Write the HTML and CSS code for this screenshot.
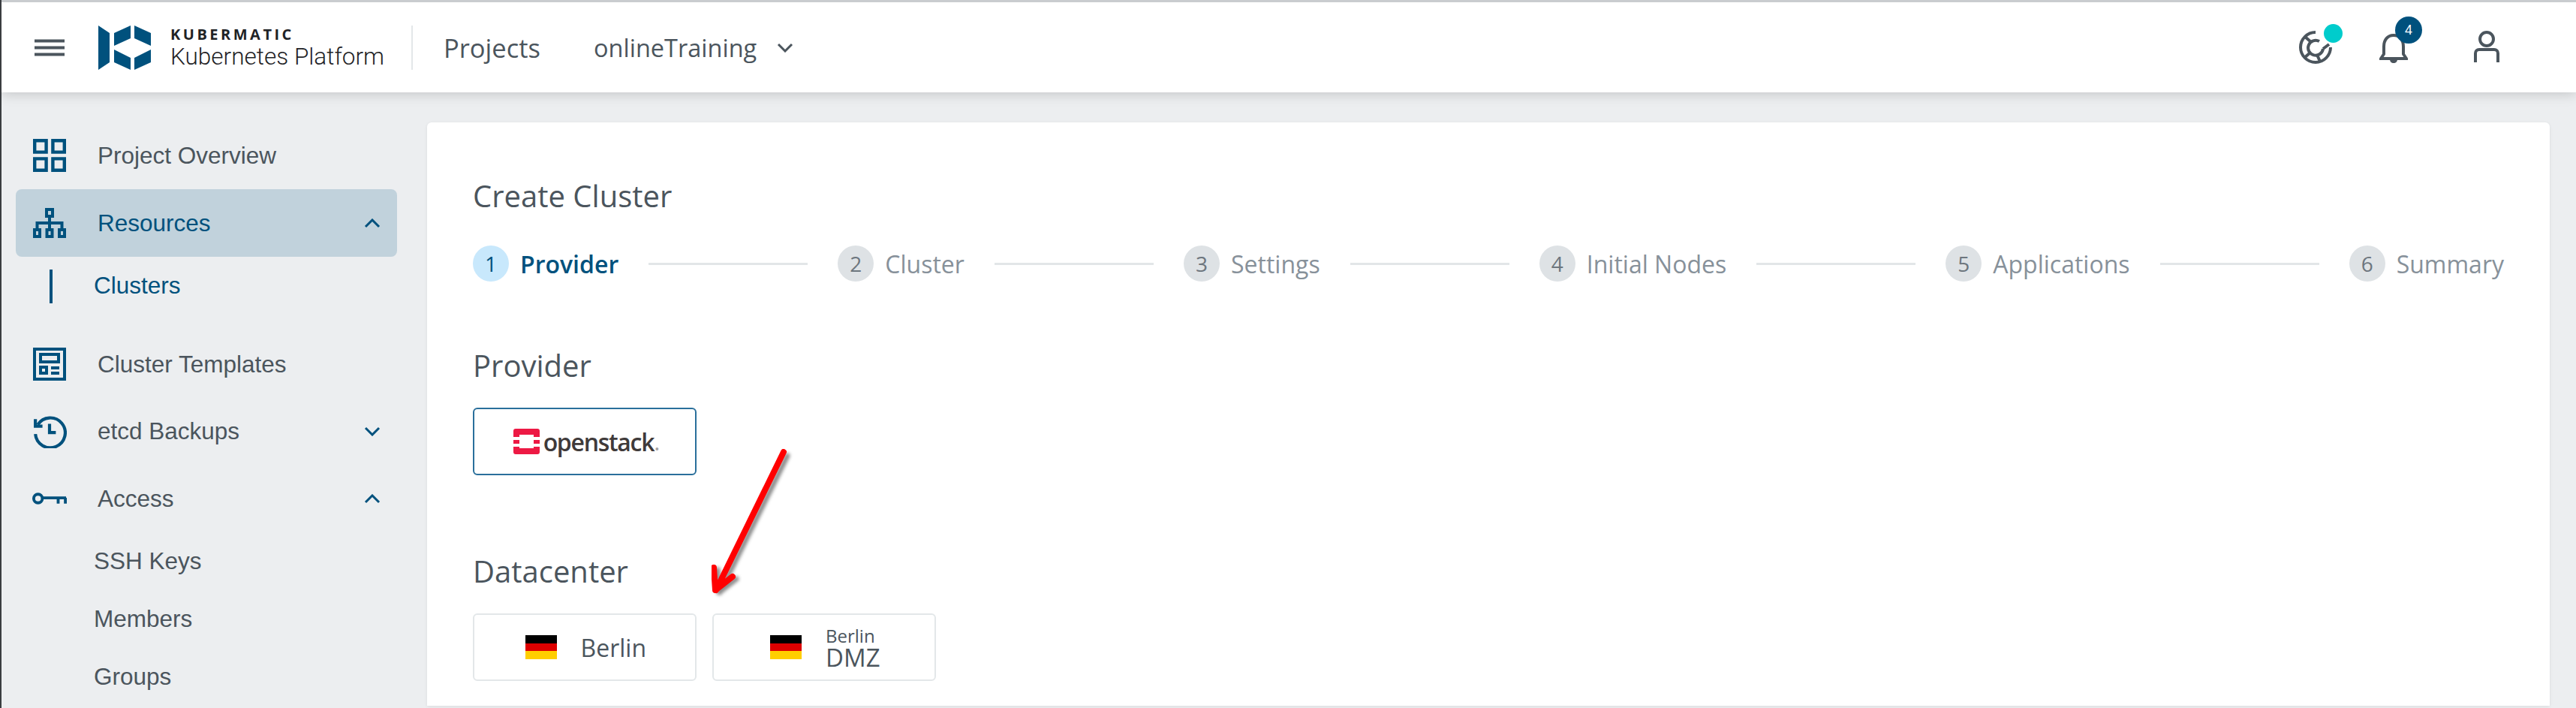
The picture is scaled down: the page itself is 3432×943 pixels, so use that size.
FILE: index.html
```html
<!DOCTYPE html>
<html>
	<head>
		<link rel="stylesheet" href="styles.css">
	</head>

	<body>
		<header class="topbar">
			<svg class="hamburger" viewBox="0 0 40 23"><path d="M0 2.500h40M0 11.500h40M0 20.500h40"/></svg>
			<svg class="logo" viewBox="0 0 70 59">
				<path d="M0 0l15 10v39L0 59zM21 10L43 0v17L21 27zM48 0l22 10v17L48 17zM21 32l22 11v16L21 49zM48 43l22-11v17L48 59z"/>
			</svg>
			<div class="brand">
				<span class="brand-name">KUBERMATIC</span>
				<span class="brand-sub">Kubernetes Platform</span>
			</div>
			<div class="topbar-title">Projects</div>
			<div class="project-select">onlineTraining</div>
			<svg class="select-arrow" viewBox="0 0 22 13"><path d="M2 2l9 9 9-9"/></svg>

			<div class="topbar-icons">
				<div class="top-icon help">
					<svg viewBox="0 0 46 46">
						<path d="M23 3A20 20 0 1 0 43 23"/>
						<path d="M28 15a10 10 0 1 0 5 10"/>
						<path d="M9 9l8 7M8 37l8-7M25 33l4 9M33 25l8-6"/>
					</svg>
					<span class="dot"></span>
				</div>
				<div class="top-icon bell">
					<svg viewBox="0 0 38 42">
						<path d="M2 36h34l-4-6V20C32 11 27 5 19 5S6 11 6 20v10z"/>
						<path class="filled" d="M14 37h10c0 3-2 5-5 5s-5-2-5-5z"/>
					</svg>
					<span class="badge">4</span>
				</div>
				<div class="top-icon user">
					<svg viewBox="0 0 34 44">
						<circle cx="17" cy="11" r="9"/>
						<path d="M2 42V30c0-3 2-5 5-5h20c3 0 5 2 5 5v12"/>
					</svg>
				</div>
			</div>
		</header>

		<div class="layout">
			<nav class="sidebar">
				<a class="nav-item">
					<svg class="nav-icon" viewBox="0 0 40 40">
						<path d="M2 2h14v14H2zM24 2h14v14H24zM2 24h14v14H2zM24 24h14v14H24z"/>
					</svg>
					<span>Project Overview</span>
				</a>
				<a class="nav-item active">
					<svg class="nav-icon" viewBox="0 0 46 40">
						<path d="M19 2h8v9h-8zM3 29h7v9H3zM19.500 29h7v9h-7zM36 29h7v9h-7zM23 11v18M6.500 29v-9h33v9"/>
					</svg>
					<span>Resources</span>
					<svg class="chevron" viewBox="0 0 22 13"><path d="M2 11l9-9 9 9"/></svg>
				</a>
				<a class="sub-item current">Clusters</a>

				<a class="nav-item templates">
					<svg class="nav-icon" viewBox="0 0 44 44">
						<path d="M2 2h40v40H2zM10 9h24v10H10zM10 26h8v8h-8zM24 27h11M24 34h11"/>
					</svg>
					<span>Cluster Templates</span>
				</a>
				<a class="nav-item short">
					<svg class="nav-icon" viewBox="0 0 42 42">
						<path d="M6 12A19 19 0 1 1 3 24"/>
						<path d="M3 5v9h9M21 11v11h8"/>
					</svg>
					<span>etcd Backups</span>
					<svg class="chevron" viewBox="0 0 22 13"><path d="M2 2l9 9 9-9"/></svg>
				</a>
				<a class="nav-item">
					<svg class="nav-icon key" viewBox="0 0 48 16">
						<circle cx="8" cy="8" r="6"/>
						<path d="M14 7h33M36 7v8M46 7v8"/>
					</svg>
					<span>Access</span>
					<svg class="chevron" viewBox="0 0 22 13"><path d="M2 11l9-9 9 9"/></svg>
				</a>
				<a class="sub-item">SSH Keys</a>
				<a class="sub-item">Members</a>
				<a class="sub-item">Groups</a>
			</nav>

			<main class="main">
				<section class="card">
					<h1 class="page-title">Create Cluster</h1>

					<div class="stepper">
						<div class="step active"><span class="step-num">1</span><span>Provider</span></div>
						<div class="step-line"></div>
						<div class="step"><span class="step-num">2</span><span>Cluster</span></div>
						<div class="step-line"></div>
						<div class="step"><span class="step-num">3</span><span>Settings</span></div>
						<div class="step-line"></div>
						<div class="step"><span class="step-num">4</span><span>Initial Nodes</span></div>
						<div class="step-line"></div>
						<div class="step"><span class="step-num">5</span><span>Applications</span></div>
						<div class="step-line"></div>
						<div class="step"><span class="step-num">6</span><span>Summary</span></div>
					</div>

					<h2 class="section-title provider-title">Provider</h2>
					<div class="options">
						<div class="option selected">
							<svg class="os-logo" viewBox="0 0 35 34">
								<path d="M3 0h29q3 0 3 3v8h-8V8H8v3H0V3q0-3 3-3zM0 15h8v5H0zM27 15h8v5h-8zM0 24h8v2h19v-2h8v7q0 3-3 3H3q-3 0-3-3z"/>
							</svg>
							<span class="os-name">openstack</span><span class="os-dot">.</span>
						</div>
					</div>

					<h2 class="section-title datacenter-title">Datacenter</h2>
					<div class="options">
						<div class="option">
							<div class="flag"></div>
							<span class="dc-name">Berlin</span>
						</div>
						<div class="option">
							<div class="flag"></div>
							<div class="dc-double">
								<span class="dc-small">Berlin</span>
								<span class="dc-big">DMZ</span>
							</div>
						</div>
					</div>
				</section>
			</main>
		</div>

		<svg class="red-arrow" viewBox="0 0 110 200">
			<path class="arrow-shadow" d="M101 9L11 191M8 161L10 191L33 173"/>
			<path class="arrow-main" d="M96 4L6 188M3 158L5 188L28 170"/>
		</svg>
	</body>
</html>
```

FILE: styles.css
```css
* {
	box-sizing: border-box;
}

body {
	margin: 0;
	height: 943px;
	overflow: hidden;
	background: #ECEEF0;
	border-left: 2px solid #3A3D40;
	font-family: "Liberation Sans", Arial, sans-serif;
	color: #4B555D;
}

svg path, svg circle {
	fill: none;
}

.topbar {
	position: relative;
	z-index: 2;
	display: flex;
	align-items: center;
	height: 123px;
	padding-left: 44px;
	background: white;
	border-top: 3px solid #C9CCCF;
	box-shadow: 0 2px 16px rgba(0, 0, 0, 0.18);
}

.hamburger {
	width: 40px;
	height: 23px;
	margin-right: 45px;
}

.hamburger path {
	stroke: #4B555D;
	stroke-width: 4px;
}

.logo {
	width: 70px;
	height: 59px;
	margin-right: 26px;
}

.logo path {
	fill: #00517D;
}

.brand {
	display: flex;
	flex-direction: column;
	width: 323px;
	height: 59px;
	border-right: 2px solid #E3E7E9;
	margin-right: 41px;
	color: #1F2326;
}

.brand-name {
	font-family: "Open Sans", sans-serif;
	font-size: 20px;
	line-height: 24px;
	font-weight: 700;
	letter-spacing: 3.500px;
}

.brand-sub {
	font-family: Roboto, sans-serif;
	font-size: 31.500px;
	line-height: 36px;
	font-weight: 300;
}

.topbar-title {
	font-family: "Open Sans", sans-serif;
	font-size: 34.500px;
	width: 200px;
}

.project-select {
	font-family: "Open Sans", sans-serif;
	font-size: 32.500px;
	width: 244px;
}

.select-arrow {
	width: 22px;
	height: 13px;
}

.select-arrow path, .chevron path {
	stroke-width: 3px;
}

.select-arrow path {
	stroke: #4B555D;
}

.topbar-icons {
	display: flex;
	margin-left: auto;
	margin-right: 102px;
	gap: 57px;
	align-items: center;
}

.top-icon {
	position: relative;
	width: 46px;
	height: 46px;
	display: flex;
	justify-content: center;
	align-items: center;
}

.top-icon svg {
	width: 100%;
	height: 100%;
}

.top-icon svg path, .top-icon svg circle {
	stroke: #4B555D;
	stroke-width: 4px;
}

.top-icon svg path.filled {
	fill: #4B555D;
	stroke: none;
}

.help {
	margin-right: 5px;
}

.bell {
	width: 38px;
	height: 42px;
	margin-right: 31px;
}

.user {
	width: 34px;
	height: 44px;
}

.dot {
	position: absolute;
	top: -8px;
	right: -13px;
	width: 25px;
	height: 25px;
	background: #00CCCC;
	border-radius: 50%;
}

.badge {
	position: absolute;
	top: -20px;
	right: -19px;
	width: 36px;
	height: 36px;
	border-radius: 50%;
	background: #00517D;
	color: white;
	font-size: 18px;
	line-height: 36px;
	text-align: center;
}

.layout {
	display: flex;
	height: 817px;
}

.sidebar {
	width: 567px;
	flex-shrink: 0;
	padding-top: 39px;
	font-size: 31.500px;
}

.nav-item {
	display: flex;
	align-items: center;
	height: 90px;
	width: 508px;
	margin-left: 19px;
	padding-left: 22px;
	padding-right: 22px;
	border-radius: 8px;
}

.nav-item.templates {
	margin-top: 21px;
}

.nav-item.short {
	height: 89px;
}

.nav-item.active {
	background: #C1D2DC;
	color: #00517D;
}

.nav-icon {
	width: 46px;
	height: 44px;
	margin-right: 41px;
	flex-shrink: 0;
}

.nav-icon path, .nav-icon circle {
	stroke: #00517D;
	stroke-width: 4px;
}

.nav-icon.key {
	height: 16px;
}

.chevron {
	width: 22px;
	height: 13px;
	margin-left: auto;
}

.chevron path {
	stroke: #00517D;
}

.sub-item {
	display: flex;
	align-items: center;
	height: 77px;
	margin-left: 123px;
}

.sub-item.current {
	position: relative;
	color: #00517D;
}

.sub-item.current::before {
	content: "";
	position: absolute;
	left: -59px;
	top: 17px;
	width: 4px;
	height: 45px;
	background: #00517D;
}

.main {
	flex: 1;
	padding: 40px 35px 0 0;
}

.card {
	height: 100%;
	padding: 78px 61px 0 61px;
	background: white;
	border-radius: 6px 6px 0 0;
	box-shadow: 0 1px 4px rgba(0, 0, 0, 0.08);
	font-family: "Open Sans", sans-serif;
}

.page-title {
	margin: 0;
	font-size: 40px;
	line-height: 40px;
	font-weight: 400;
}

.stepper {
	display: flex;
	align-items: center;
	margin-top: 46px;
	height: 48px;
}

.step {
	display: flex;
	align-items: center;
	gap: 15px;
	font-size: 32px;
	color: #87919A;
}

.step.active {
	color: #00517D;
	font-weight: 600;
}

.step-num {
	width: 48px;
	height: 48px;
	border-radius: 50%;
	background: #DEE2E5;
	color: #6D767E;
	font-size: 28px;
	font-weight: 400;
	line-height: 48px;
	text-align: center;
}

.step.active .step-num {
	background: #C8E8FC;
	color: #00517D;
}

.step-line {
	flex: 1;
	height: 3px;
	margin: 0 40px;
	background: #E2E6E8;
}

.section-title {
	margin: 0 0 36px 0;
	font-size: 40px;
	line-height: 40px;
	font-weight: 400;
}

.provider-title {
	margin-top: 92px;
}

.datacenter-title {
	margin-top: 108px;
}

.options {
	display: flex;
	gap: 21px;
}

.option {
	display: flex;
	align-items: center;
	justify-content: center;
	width: 298px;
	height: 90px;
	border: 2px solid #E3E7E9;
	border-radius: 6px;
}

.option.selected {
	border-color: #2A6F9B;
}

.os-logo {
	width: 35px;
	height: 34px;
	margin-right: 5px;
	margin-left: 5px;
}

.os-logo path {
	fill: #ED1944;
}

.os-name {
	font-size: 32px;
	font-weight: 600;
	letter-spacing: -1.300px;
	color: #3F3A3A;
}

.os-dot {
	font-size: 31px;
	color: #A5A2A2;
}

.flag {
	width: 42px;
	height: 32px;
	margin-right: 32px;
	background: linear-gradient(to bottom, #000 33.3%, #DD0000 33.3%, #DD0000 66.6%, #FFCE00 66.6%);
}

.dc-name {
	font-size: 32px;
	width: 85px;
}

.dc-double {
	display: flex;
	flex-direction: column;
	width: 70px;
}

.dc-small {
	font-size: 24px;
	line-height: 28px;
}

.dc-big {
	font-size: 33px;
	line-height: 30px;
}

.red-arrow {
	position: absolute;
	left: 948px;
	top: 598px;
	width: 110px;
	height: 200px;
	z-index: 3;
}

.red-arrow path {
	stroke-linecap: round;
	stroke-linejoin: round;
}

.arrow-main {
	stroke: #FF0000;
	stroke-width: 8px;
}

.arrow-shadow {
	stroke: rgba(0, 0, 0, 0.45);
	stroke-width: 7px;
	filter: blur(2px);
}
```
